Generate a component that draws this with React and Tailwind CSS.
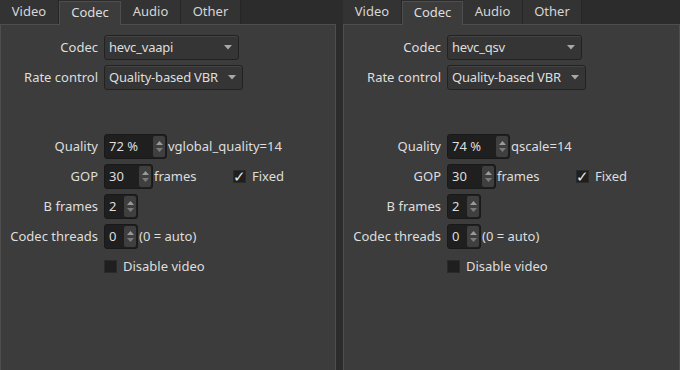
import { useState } from "react";

const font = { fontFamily: '"Noto Sans", "Open Sans", sans-serif' };

const Arrow = () => (
  <svg width="8" height="5" viewBox="0 0 8 5" className="shrink-0">
    <path d="M0 0 L8 0 L4 4.5 Z" fill="#a8a8a8" />
  </svg>
);

const Combo = ({ value, width }) => (
  <div
    className="h-[25px] flex items-center justify-between pl-[4px] pr-[6px] rounded-[3px] bg-[#353535] border border-[#222222] shadow-[inset_0_1px_0_#444]"
    style={{ width }}
  >
    <span className="whitespace-nowrap tracking-[-0.2px]">{value}</span>
    <Arrow />
  </div>
);

const Spin = ({ value, width }) => (
  <div
    className="h-[25px] flex items-stretch rounded-[3px] bg-[#1f1f1f] border border-[#191919]"
    style={{ width }}
  >
    <span className="flex-1 flex items-center pl-[4px] whitespace-nowrap">{value}</span>
    <div className="w-[12px] my-[1px] mr-[1px] rounded-[2px] bg-[#3f3f3f] flex flex-col items-center justify-center gap-[3px]">
      <svg width="7" height="4" viewBox="0 0 7 4">
        <path d="M0 4 L3.5 0 L7 4 Z" fill="#9a9a9a" />
      </svg>
      <svg width="7" height="4" viewBox="0 0 7 4">
        <path d="M0 0 L3.5 4 L7 0 Z" fill="#7a7a7a" />
      </svg>
    </div>
  </div>
);

const Check = ({ checked, label }) => (
  <div className="flex items-center gap-[6px]">
    <div className="w-[13px] h-[13px] bg-[#1f1f1f] border border-[#2a2a2a] flex items-center justify-center text-[15px] leading-none text-[#e8e8e8]">
      {checked ? "✓" : ""}
    </div>
    <span>{label}</span>
  </div>
);

const Row = ({ label, children }) => (
  <div className="flex items-center h-[25px] gap-[6px]">
    <span className="w-[88px] text-right whitespace-nowrap">{label}</span>
    {children}
  </div>
);

const Panel = ({ codec, quality, qualityNote, tabWidths, className }) => {
  const [tab] = useState("Codec");
  const tabs = ["Video", "Codec", "Audio", "Other"];
  return (
    <div className={"flex flex-col " + className}>
      <div className="h-[24px] flex items-end bg-[#2c2c2c]">
        {tabs.map((t, i) =>
          t === tab ? (
            <div
              key={t}
              className="h-[24px] flex items-center justify-center pb-[2px] bg-[#3c3c3c] border border-b-0 border-[#4e4e4e] -mb-px z-10"
              style={{ width: tabWidths[i] }}
            >
              {t}
            </div>
          ) : (
            <div
              key={t}
              className="h-[24px] flex items-center justify-center bg-[#333333] border-r border-[#262626] text-[#d6d6d6]"
              style={{ width: tabWidths[i] }}
            >
              {t}
            </div>
          )
        )}
      </div>
      <div className="flex-1 bg-[#3c3c3c] border border-b-0 border-[#4e4e4e] pt-[10px] pl-[9px] flex flex-col">
        <div className="flex flex-col gap-[5px]">
          <Row label="Codec">
            <Combo value={codec} width={135} />
          </Row>
          <Row label="Rate control">
            <Combo value="Quality-based VBR" width={139} />
          </Row>
        </div>
        <div className="flex flex-col gap-[5px] mt-[44px]">
          <Row label="Quality">
            <div className="flex items-center gap-[1px]">
              <Spin value={quality} width={63} />
              <span className="whitespace-nowrap">{qualityNote}</span>
            </div>
          </Row>
          <Row label="GOP">
            <div className="flex items-center w-[123px] gap-[1px]">
              <Spin value="30" width={49} />
              <span>frames</span>
            </div>
            <Check checked label="Fixed" />
          </Row>
          <Row label="B frames">
            <Spin value="2" width={34} />
          </Row>
          <Row label="Codec threads">
            <div className="flex items-center gap-[1px]">
              <Spin value="0" width={34} />
              <span className="whitespace-nowrap">(0 = auto)</span>
            </div>
          </Row>
          <div className="flex items-center h-[25px] pl-[94px]">
            <Check label="Disable video" />
          </div>
        </div>
      </div>
    </div>
  );
};

export default function App() {
  return (
    <div
      className="w-[680px] h-[370px] flex bg-[#2c2c2c] text-[13px] text-[#dedede] overflow-hidden"
      style={font}
    >
      <Panel
        className="w-[336px]"
        codec="hevc_vaapi"
        quality="72 %"
        qualityNote="vglobal_quality=14"
        tabWidths={[59, 62, 60, 60]}
      />
      <div className="w-[7px] bg-[#2c2c2c]" />
      <Panel
        className="flex-1"
        codec="hevc_qsv"
        quality="74 %"
        qualityNote="qscale=14"
        tabWidths={[59, 61, 60, 59]}
      />
    </div>
  );
}
